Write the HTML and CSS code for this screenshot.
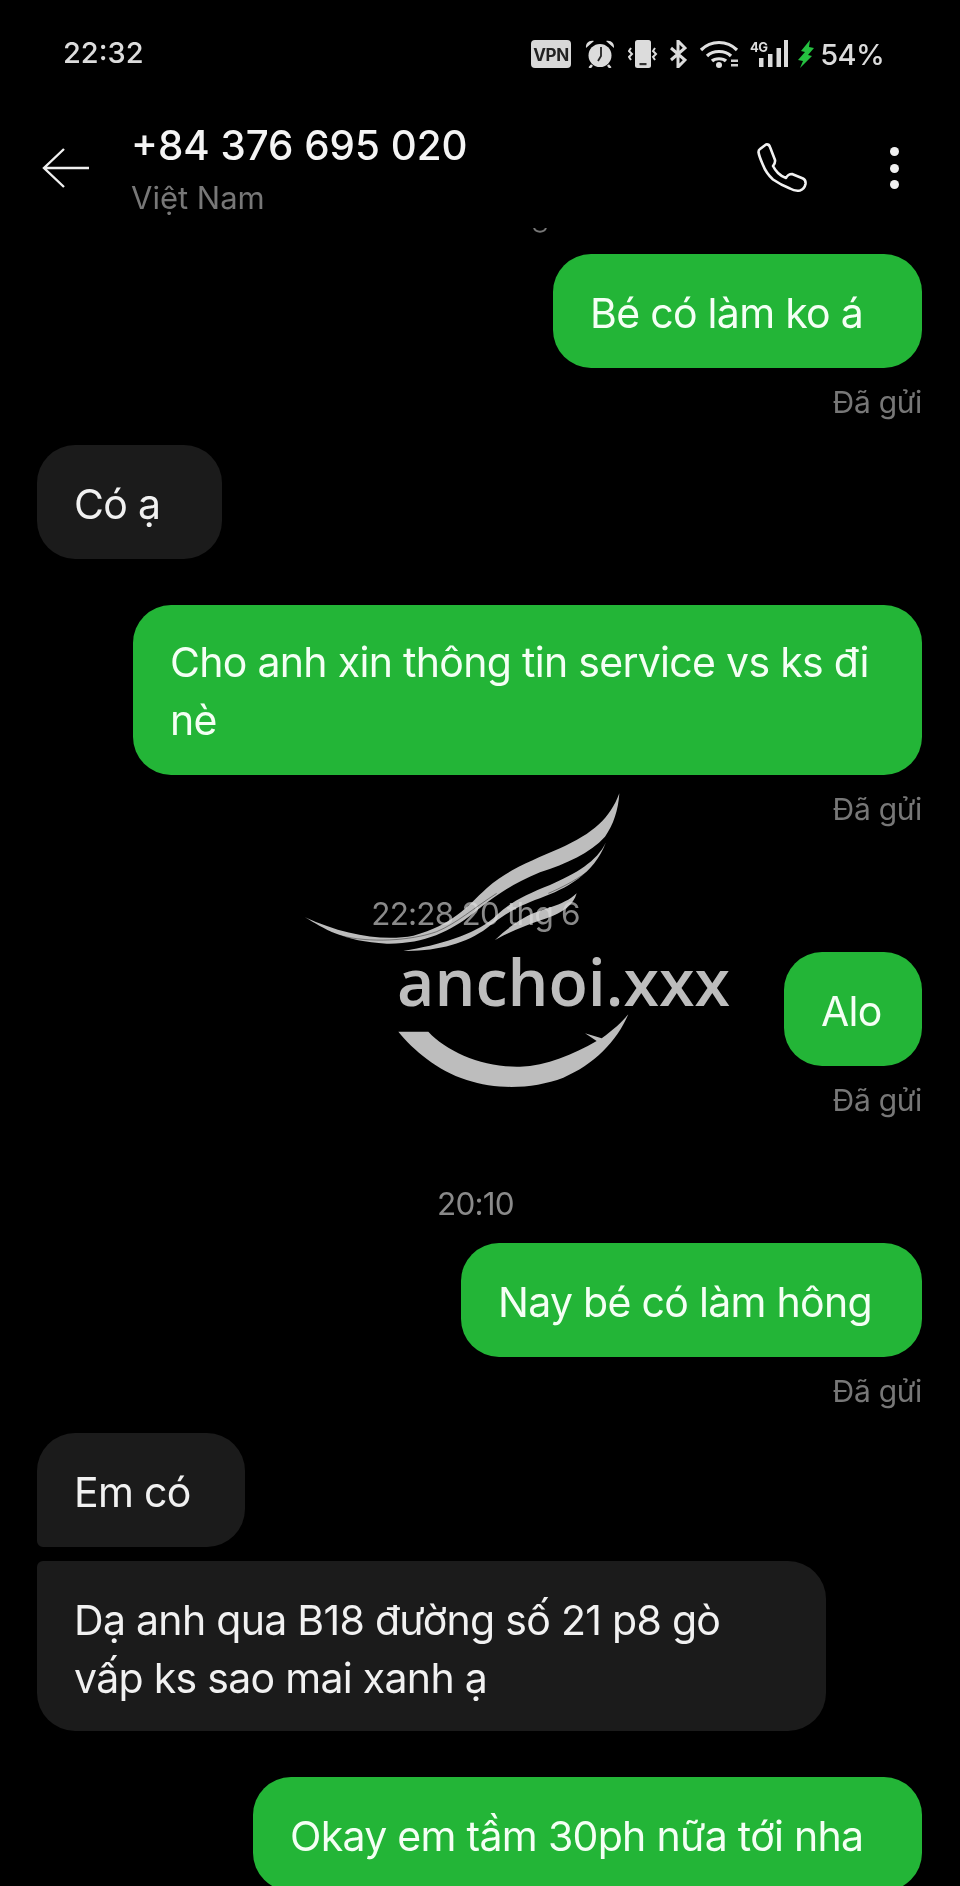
FILE: index.html
```html
<!DOCTYPE html>
<html lang="vi">
<head>
<meta charset="utf-8">
<title>+84 376 695 020</title>
<link rel="stylesheet" href="styles.css">
</head>
<body>
<div class="screen">
  <div class="status">
    <span class="clock">22:32</span>
    <div class="status-icons">
      <svg class="ic ic-vpn" viewBox="0 0 40 28"><rect width="40" height="28" rx="4" fill="#d8d8d8"/><text x="20" y="20.500" text-anchor="middle" class="vpn-text">VPN</text></svg>
      <svg class="ic ic-alarm" viewBox="0 0 30 28"><circle cx="15" cy="15.500" r="11.500" fill="#dcdcdc"/><path d="M16 7v9l-3 5" fill="none" stroke="#222" stroke-width="1.800"/><path d="M1 8C0.500 3 4 0 9 1ZM29 8C29.500 3 26 0 21 1Z" fill="#dcdcdc"/><path d="M7 25l-2.500 3M23 25l2.500 3" stroke="#dcdcdc" stroke-width="2.600"/></svg>
      <svg class="ic ic-vib" viewBox="0 0 30 28"><rect x="7" y="0" width="16" height="28" rx="2.500" fill="#dcdcdc"/><rect x="11.500" y="23" width="7" height="2.200" fill="#333"/><path d="M3 8L1 11l3 3-3 3 2 3M27 8l-2 3 3 3-3 3 2 3" fill="none" stroke="#dcdcdc" stroke-width="2"/></svg>
      <svg class="ic ic-bt" viewBox="0 0 18 28"><path d="M2 8l14 12-7 7V1l7 7L2 20" fill="none" stroke="#dcdcdc" stroke-width="3"/></svg>
      <svg class="ic ic-wifi" viewBox="0 0 40 28"><path d="M2 10C12 0 28 0 38 10M8 16C14 10 26 10 32 16M13 21C16 18 24 18 27 21" fill="none" stroke="#e0e0e0" stroke-width="3.200"/><circle cx="20" cy="25" r="3" fill="#e0e0e0"/><path d="M32 19.500h7v2.500h-7zM32 24h7v2.500h-7z" fill="#cfcfcf"/></svg>
      <svg class="ic ic-sig" viewBox="0 0 38 28"><text x="0" y="11.500" class="sig-text">4G</text><path d="M9 18h4.500v9H9zM18 14h4.500v13H18zM26.500 8H31v19h-4.500zM34 0h4v27h-4z" fill="#dcdcdc"/></svg>
      <svg class="ic ic-bolt" viewBox="0 0 16 28"><path d="M12 0L3 11l4 1-7 8 5 1-3 7L14 16l-4-1 6-7-5-1z" fill="#25c040"/></svg>
      <span class="pct">54%</span>
    </div>
  </div>

  <header class="topbar">
    <svg class="back" viewBox="0 0 47 40"><path d="M22 1L2 20l20 19M2 20h45" fill="none" stroke="#f0f0f0" stroke-width="2.400"/></svg>
    <div class="who">
      <div class="num">+84 376 695 020</div>
      <div class="country">Việt Nam</div>
    </div>
    <svg class="call" viewBox="0 0 50 50"><path d="M3 6L9 1.500Q12 1 13 4L18 17Q18.500 20 16 23 18 27 21 30 24.500 33.500 29 35 31 31 35 31L46 35.500Q49 37 48.500 41 47.500 46 43 47.500 38 48.500 33 45.500 24 42 16 36.500 9 30 6 22 2 13 1.500 9 1.500 7 3 6Z" fill="none" stroke="#f2f2f2" stroke-width="2.600" stroke-linejoin="round"/></svg>
    <div class="dots"><i></i><i></i><i></i></div>
  </header>

  <main class="thread">
    <svg class="clipped-g" viewBox="0 0 14 6"><path d="M1 0c2 5 10 5 12 0" fill="none" stroke="#777" stroke-width="2"/></svg>

    <div class="bubble out b1">Bé có làm ko á</div>
    <div class="sent">Đã gửi</div>

    <div class="bubble in b2">Có ạ</div>

    <div class="bubble out b3">Cho anh xin thông tin service vs ks đi nè</div>
    <div class="sent">Đã gửi</div>

    <div class="stamp s1">22:28 20 thg 6</div>
    <div class="bubble out b4">Alo</div>
    <div class="sent">Đã gửi</div>

    <div class="stamp s2">20:10</div>
    <div class="bubble out b5">Nay bé có làm hông</div>
    <div class="sent">Đã gửi</div>

    <div class="bubble in first b6">Em có</div>
    <div class="bubble in last b7">Dạ anh qua B18 đường số 21 p8 gò vấp ks sao mai xanh ạ</div>

    <div class="bubble out b8">Okay em tầm 30ph nữa tới nha</div>
  </main>

  <div class="mark">
    <svg class="mark-art" viewBox="0 0 990 930">
      <path d="M958 25C930 100 880 145 780 190 700 225 620 255 560 310 500 365 460 420 340 452 250 470 130 450 15 397 70 430 130 470 260 476 370 478 450 440 520 385 580 335 630 300 720 262 800 235 870 205 915 155 940 120 955 75 958 25Z" class="wing"/>
      <path d="M918 172C890 230 830 265 750 300 680 328 630 350 580 400 520 450 420 480 310 498 410 500 500 475 560 430 610 390 650 365 720 340 800 310 880 270 918 172Z" class="wing"/>
      <path d="M830 325C790 365 720 370 670 400 635 420 605 445 585 465 630 440 680 420 740 400 790 382 820 360 830 325Z" class="wing"/>
      <path d="M295 740L385 740C440 800 550 848 660 845 740 843 820 808 890 768L855 745 905 760C940 735 965 712 985 688 950 770 880 840 790 878 700 912 590 915 500 885 410 855 340 795 295 740Z" class="wing"/>
      <path d="M120 452C210 474 330 468 410 440 470 415 520 370 590 325M860 262C820 290 780 310 745 325" class="wing-cut"/>
    </svg>
    <span class="mark-text">anchoi.xxx</span>
  </div>
</div>
</body>
</html>
```

FILE: styles.css
```css
* { box-sizing: border-box; }
html, body { margin: 0; padding: 0; background: #000; }
body { font-family: Inter, "Noto Sans", sans-serif; color: #f1f1f1; }
.screen { position: relative; width: 960px; height: 1886px; overflow: hidden; background: #000; display: flex; flex-direction: column; filter: blur(0.4px); }

.status { height: 100px; flex: none; display: flex; justify-content: space-between; align-items: flex-start; padding: 38px 76px 0 63px; color: #dcdcdc; }
.clock { font-size: 29px; line-height: 30px; font-weight: 500; }
.status-icons { display: flex; align-items: flex-start; margin-top: 2px; }
.ic { display: block; height: 28px; flex: none; }
.ic-vpn { width: 40px; margin-right: 14px; }
.ic-alarm { width: 30px; margin-right: 13px; }
.ic-vib { width: 30px; margin-right: 11px; }
.ic-bt { width: 18px; margin-right: 12px; }
.ic-wifi { width: 40px; margin-right: 11px; }
.ic-sig { width: 38px; margin-right: 10px; }
.ic-bolt { width: 16px; margin-right: 6px; }
.vpn-text { font-family: Inter, sans-serif; font-size: 17px; font-weight: 700; letter-spacing: -0.4px; fill: #222; }
.sig-text { font-family: Inter, sans-serif; font-size: 13px; font-weight: 700; letter-spacing: -0.5px; fill: #dcdcdc; }
.pct { font-size: 29px; line-height: 30px; font-weight: 500; letter-spacing: -0.7px; }

.topbar { height: 122px; flex: none; display: flex; align-items: flex-start; position: relative; }
.back { width: 47px; height: 40px; margin: 48px 42px 0 42px; flex: none; }
.who { flex: 1; padding-top: 21px; }
.num { font-size: 40.300px; line-height: 50px; font-weight: 500; color: #f4f4f4; }
.country { font-size: 31px; line-height: 40px; color: #777; margin-top: 7px; }
.call { width: 50px; height: 50px; margin: 43px 83px 0 0; flex: none; }
.dots { display: flex; flex-direction: column; gap: 7.500px; margin: 47px 61px 0 0; flex: none; }
.dots i { display: block; width: 9px; height: 9px; border-radius: 50%; background: #f0f0f0; }

.thread { flex: 1; min-height: 0; overflow: hidden; padding: 0 38px 0 37px; display: flex; flex-direction: column; align-items: flex-start; }
.clipped-g { display: block; width: 14px; height: 6px; margin: 6px 0 0 496px; flex: none; }

.bubble { font-size: 41px; letter-spacing: -0.7px; line-height: 56px; padding: 31px 37px 27px; border-radius: 38px; flex: none; }
.out { align-self: flex-end; background: #23b537; color: #f4fff4; }
.in { background: #1b1b1b; color: #f1f1f1; }
.in.first { border-bottom-left-radius: 6px; }
.in.last { border-top-left-radius: 6px; }

.sent { align-self: flex-end; font-size: 30px; letter-spacing: -0.3px; line-height: 34px; color: #777; margin-top: 17px; margin-bottom: 1px; flex: none; }
.stamp { align-self: center; font-size: 31.500px; letter-spacing: -0.8px; line-height: 36px; color: #8a8a8a; flex: none; margin-left: -8px; }

.b1 { margin-top: 20px; width: 369px; }
.b2 { margin-top: 25px; width: 185px; }
.b3 { margin-top: 46px; width: 789px; line-height: 58px; padding-top: 28px; padding-bottom: 26px; }
.s1 { margin-top: 69px; }
.b4 { margin-top: 20px; width: 138px; }
.s2 { margin-top: 68px; }
.b5 { margin-top: 21px; width: 461px; }
.b6 { margin-top: 24px; width: 208px; }
.b7 { margin-top: 14px; width: 789px; line-height: 58px; padding-top: 30px; padding-bottom: 24px; }
.b8 { margin-top: 46px; width: 669px; }

.mark { position: absolute; left: 300px; top: 785px; width: 330px; height: 310px; pointer-events: none; opacity: 0.85; }
.mark-art { display: block; width: 330px; height: 310px; }
.wing { fill: #dedede; }
.wing-cut { fill: none; stroke: #000; stroke-width: 1.200; }
.mark-text { position: absolute; left: 97px; top: 151px; font-family: "Open Sans", sans-serif; font-weight: 600; font-size: 64.500px; line-height: 90px; color: #dedede; white-space: nowrap; }
```
